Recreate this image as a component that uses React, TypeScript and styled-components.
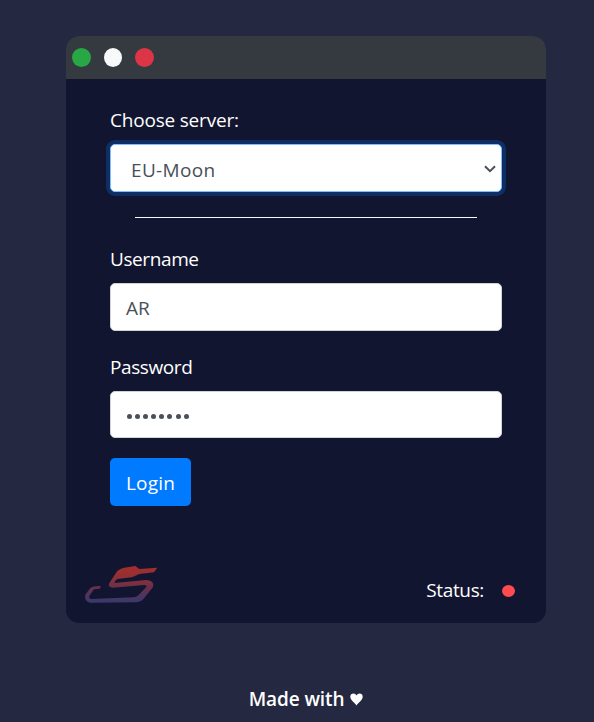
import React from "react";
import styled, { createGlobalStyle } from "styled-components";

const GlobalStyle = createGlobalStyle`
  *, *::before, *::after { box-sizing: border-box; }
  body {
    margin: 0;
    background: #242841;
    color: #fff;
    font-family: "Open Sans", "Noto Sans", sans-serif;
    font-size: 19px;
    line-height: 30px;
    overflow: hidden;
  }
`;

const Page = styled.div`
  height: 722px;
  padding: 36px 48px 0 66px;
  display: flex;
  flex-direction: column;
`;

const Card = styled.main`
  width: 480px;
  height: 587px;
  border-radius: 13px;
  overflow: hidden;
  background: #121530;
  display: flex;
  flex-direction: column;
`;

const TitleBar = styled.header`
  height: 43px;
  flex: none;
  padding-left: 6px;
  display: flex;
  align-items: center;
  background: #343a40;
`;

const WindowDot = styled.span<{ $color: string; $width?: number }>`
  width: ${(p) => p.$width ?? 19}px;
  height: 19px;
  margin-right: 13px;
  border-radius: 50%;
  background: ${(p) => p.$color};
`;

const Form = styled.form`
  padding: 26px 44px 0;
`;

const Label = styled.label<{ $spacing: number }>`
  display: block;
  margin-bottom: 9px;
  letter-spacing: ${(p) => p.$spacing}px;
`;

const Field = styled.div<{ $focused?: boolean; $height?: number; $gap: number }>`
  height: ${(p) => p.$height ?? 48}px;
  margin-bottom: ${(p) => p.$gap}px;
  padding: 2px 5px 0 15px;
  display: flex;
  align-items: center;
  border: 1px solid ${(p) => (p.$focused ? "#80bdff" : "#ced4da")};
  border-radius: 5px;
  background: #fff;
  color: #495057;
  box-shadow: ${(p) => (p.$focused ? "0 0 0 4px #0e2f65" : "none")};
`;

const Selected = styled.span`
  flex: 1;
  padding: 1px 0 0 5px;
  letter-spacing: 0.35px;
`;

const Chevron = styled.svg`
  width: 12px;
  height: 8px;
  margin-top: -1px;
`;

const Mask = styled.span`
  display: flex;
  gap: 3.1px;
  padding-left: 1px;
  margin-top: 1px;
`;

const MaskDot = styled.i`
  width: 5px;
  height: 5px;
  border-radius: 50%;
  background: #495057;
`;

const Divider = styled.hr`
  height: 1px;
  margin: 0 25px 26px;
  border: 0;
  background: #f8f9fa;
`;

const LoginButton = styled.button`
  width: 81px;
  height: 48px;
  padding: 2px 0 0;
  display: block;
  border: 0;
  border-radius: 5px;
  background: #007bff;
  color: #fff;
  font: inherit;
  letter-spacing: 0.2px;
`;

const CardFooter = styled.footer`
  margin-top: auto;
  height: 68px;
  padding: 0 31px 0 10px;
  display: flex;
  justify-content: space-between;
`;

const Logo = styled.svg`
  width: 100px;
  height: 60px;
`;

const Status = styled.div`
  height: 30px;
  margin-top: 20px;
  display: flex;
  align-items: center;
  letter-spacing: -0.35px;
`;

const StatusDot = styled.span`
  width: 13px;
  height: 12px;
  margin: 2px 0 0 18px;
  border-radius: 50%;
  background: #ff4b4f;
`;

const Credit = styled.p`
  width: 480px;
  margin: 61px 0 0;
  display: flex;
  justify-content: center;
  align-items: center;
  gap: 6px;
  font-weight: 600;
  letter-spacing: -0.1px;
`;

const Heart = styled.svg`
  width: 13px;
  height: 13px;
`;

export default function App() {
  return (
    <>
      <GlobalStyle />
      <Page>
        <Card>
          <TitleBar>
            <WindowDot $color="#28a745" />
            <WindowDot $color="#f8f9fa" $width={18} />
            <WindowDot $color="#dc3545" />
          </TitleBar>
          <Form>
            <Label $spacing={-0.2}>Choose server:</Label>
            <Field $focused $gap={25}>
              <Selected>EU-Moon</Selected>
              <Chevron viewBox="0 0 12 8">
                <path d="M1 1.2 6 6.2 11 1.2" fill="none" stroke="#495057" strokeWidth="2" />
              </Chevron>
            </Field>
            <Divider />
            <Label $spacing={-0.4}>Username</Label>
            <Field $gap={21}>AR</Field>
            <Label $spacing={-0.4}>Password</Label>
            <Field $height={47} $gap={20}>
              <Mask>
                {Array.from({ length: 8 }, (_, i) => (
                  <MaskDot key={i} />
                ))}
              </Mask>
            </Field>
            <LoginButton type="button">Login</LoginButton>
          </Form>
          <CardFooter>
            <Logo viewBox="0 0 300 180">
              <defs>
                <linearGradient id="flame" gradientUnits="userSpaceOnUse" x1="0" y1="35" x2="0" y2="142">
                  <stop offset="0" stopColor="#a52e2d" />
                  <stop offset="0.3" stopColor="#903034" />
                  <stop offset="0.6" stopColor="#68304c" />
                  <stop offset="1" stopColor="#38396e" />
                </linearGradient>
              </defs>
              <path d="M106 75 124 48Q132 40 145 38L178 33 190 42 244 38 234 52 190 57 168 67 124 72Q117 76 115 84L212 75Q237 78 231 96L203 131Q194 141 180 142L42 143Q24 138 28 119L43 99Q48 93 75 93L71 101 54 103 40 122Q38 131 46 132L174 127Q183 126 187 121L211 96Q213 90 205 90L110 98Q96 96 99 86Z" fill="url(#flame)" />
            </Logo>
            <Status>
              Status:
              <StatusDot />
            </Status>
          </CardFooter>
        </Card>
        <Credit>
          Made with
          <Heart viewBox="0 0 13 13">
            <path d="M6.5 12.5C4.5 9.5.3 7.2.3 3.8.3 1.8 1.7.6 3.4.6c1.4 0 2.5.8 3.1 2 .6-1.2 1.7-2 3.1-2 1.7 0 3.1 1.2 3.1 3.2 0 3.4-4.2 5.7-6.2 8.7Z" fill="#fff" />
          </Heart>
        </Credit>
      </Page>
    </>
  );
}
